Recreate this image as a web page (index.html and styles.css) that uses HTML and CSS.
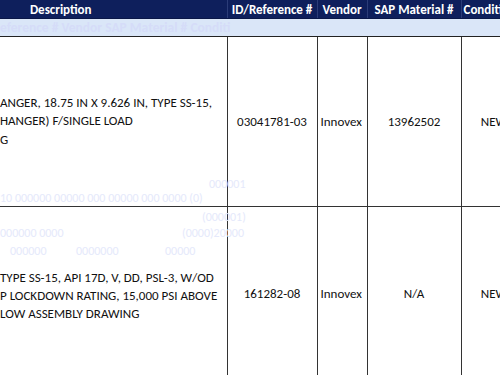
FILE: index.html
```html
<!DOCTYPE html>
<html>
<head>
<meta charset="utf-8">
<link rel="stylesheet" href="styles.css">
</head>
<body>
<div class="sheet">
  <table class="grid">
    <colgroup>
      <col class="c-desc"><col class="c-id"><col class="c-vendor"><col class="c-sap"><col class="c-cond">
    </colgroup>
    <thead>
      <tr class="head">
        <th class="h-desc">Description</th>
        <th>ID/Reference #</th>
        <th>Vendor</th>
        <th>SAP Material #</th>
        <th class="h-cond">Condition</th>
      </tr>
      <tr class="band">
        <td colspan="5"><span class="ghost-band">eference # Vendor SAP Material # Conditi</span></td>
      </tr>
    </thead>
    <tbody>
      <tr class="row">
        <td class="desc">
          <div class="line">ANGER, 18.75 IN X 9.626 IN, TYPE SS-15,</div>
          <div class="line">HANGER) F/SINGLE LOAD</div>
          <div class="line">G</div>
        </td>
        <td class="center">03041781-03</td>
        <td class="vendor">Innovex</td>
        <td class="center">13962502</td>
        <td class="center">NEW</td>
      </tr>
      <tr class="row row2">
        <td class="desc">
          <div class="line">TYPE SS-15, API 17D, V, DD, PSL-3, W/OD</div>
          <div class="line">P LOCKDOWN RATING, 15,000 PSI ABOVE</div>
          <div class="line">LOW ASSEMBLY DRAWING</div>
        </td>
        <td class="center">161282-08</td>
        <td class="vendor">Innovex</td>
        <td class="center">N/A</td>
        <td class="center">NEW</td>
      </tr>
    </tbody>
  </table>
  <span class="ghost g1">000001</span>
  <span class="ghost g2">10 000000 00000 000 00000 000 0000 (0)</span>
  <span class="ghost g3">(000001)</span>
  <span class="ghost g4">000000 0000</span>
  <span class="ghost g5">(0000)20000</span>
  <span class="ghost g6">000000</span>
  <span class="ghost g7">0000000</span>
  <span class="ghost g8">00000</span>
</div>
</body>
</html>
```
FILE: styles.css
```css
html, body {
  margin: 0;
  padding: 0;
  background: #ffffff;
}

.sheet {
  position: relative;
  width: 500px;
  height: 375px;
  overflow: hidden;
  font-family: Carlito, "Liberation Sans", Arial, sans-serif;
  font-size: 13px;
  color: #111;
}

.grid {
  border-collapse: collapse;
  table-layout: fixed;
  width: 527px;
}

.c-desc { width: 227px; }
.c-id { width: 90px; }
.c-vendor { width: 50px; }
.c-sap { width: 94px; }
.c-cond { width: 66px; }

.head th {
  height: 18px;
  padding: 0;
  background: #0e1f5c;
  color: #ffffff;
  font-weight: bold;
  font-size: 13px;
  text-align: center;
  border-left: 1px solid #2b3c78;
  border-bottom: 1px solid #0a1748;
  white-space: nowrap;
  overflow: hidden;
}

.head .h-desc {
  border-left: none;
  padding-right: 105px;
}

.head .h-cond {
  text-align: left;
  padding-left: 2px;
}

.band td {
  height: 17px;
  padding: 0;
  background: #dae6f8;
  border-bottom: 1px solid #222;
  white-space: nowrap;
  overflow: hidden;
  font-weight: bold;
  font-size: 13.5px;
}

.ghost-band {
  color: #d5dcf8;
}

.row td {
  height: 169px;
  padding: 0;
  border: 1px solid #333;
  vertical-align: middle;
  white-space: nowrap;
  overflow: hidden;
}

.row td.desc {
  border-left: none;
}

.row td.center {
  text-align: center;
}

.row td.vendor {
  text-align: left;
  padding-left: 3px;
}

.line {
  height: 18.5px;
  line-height: 18.5px;
}

.row2 .line {
  height: 18px;
  line-height: 18px;
}

.row2 td.desc {
  padding-top: 4px;
}

.ghost {
  position: absolute;
  color: #e5e9fb;
  font-size: 12px;
  line-height: 12px;
  white-space: nowrap;
  pointer-events: none;
}

.g1 { left: 209px; top: 178px; }
.g2 { left: 0; top: 192px; }
.g3 { left: 202px; top: 211px; }
.g4 { left: 0; top: 227px; }
.g5 { left: 182px; top: 227px; }
.g6 { left: 10px; top: 245px; }
.g7 { left: 76px; top: 245px; }
.g8 { left: 165px; top: 245px; }
```
